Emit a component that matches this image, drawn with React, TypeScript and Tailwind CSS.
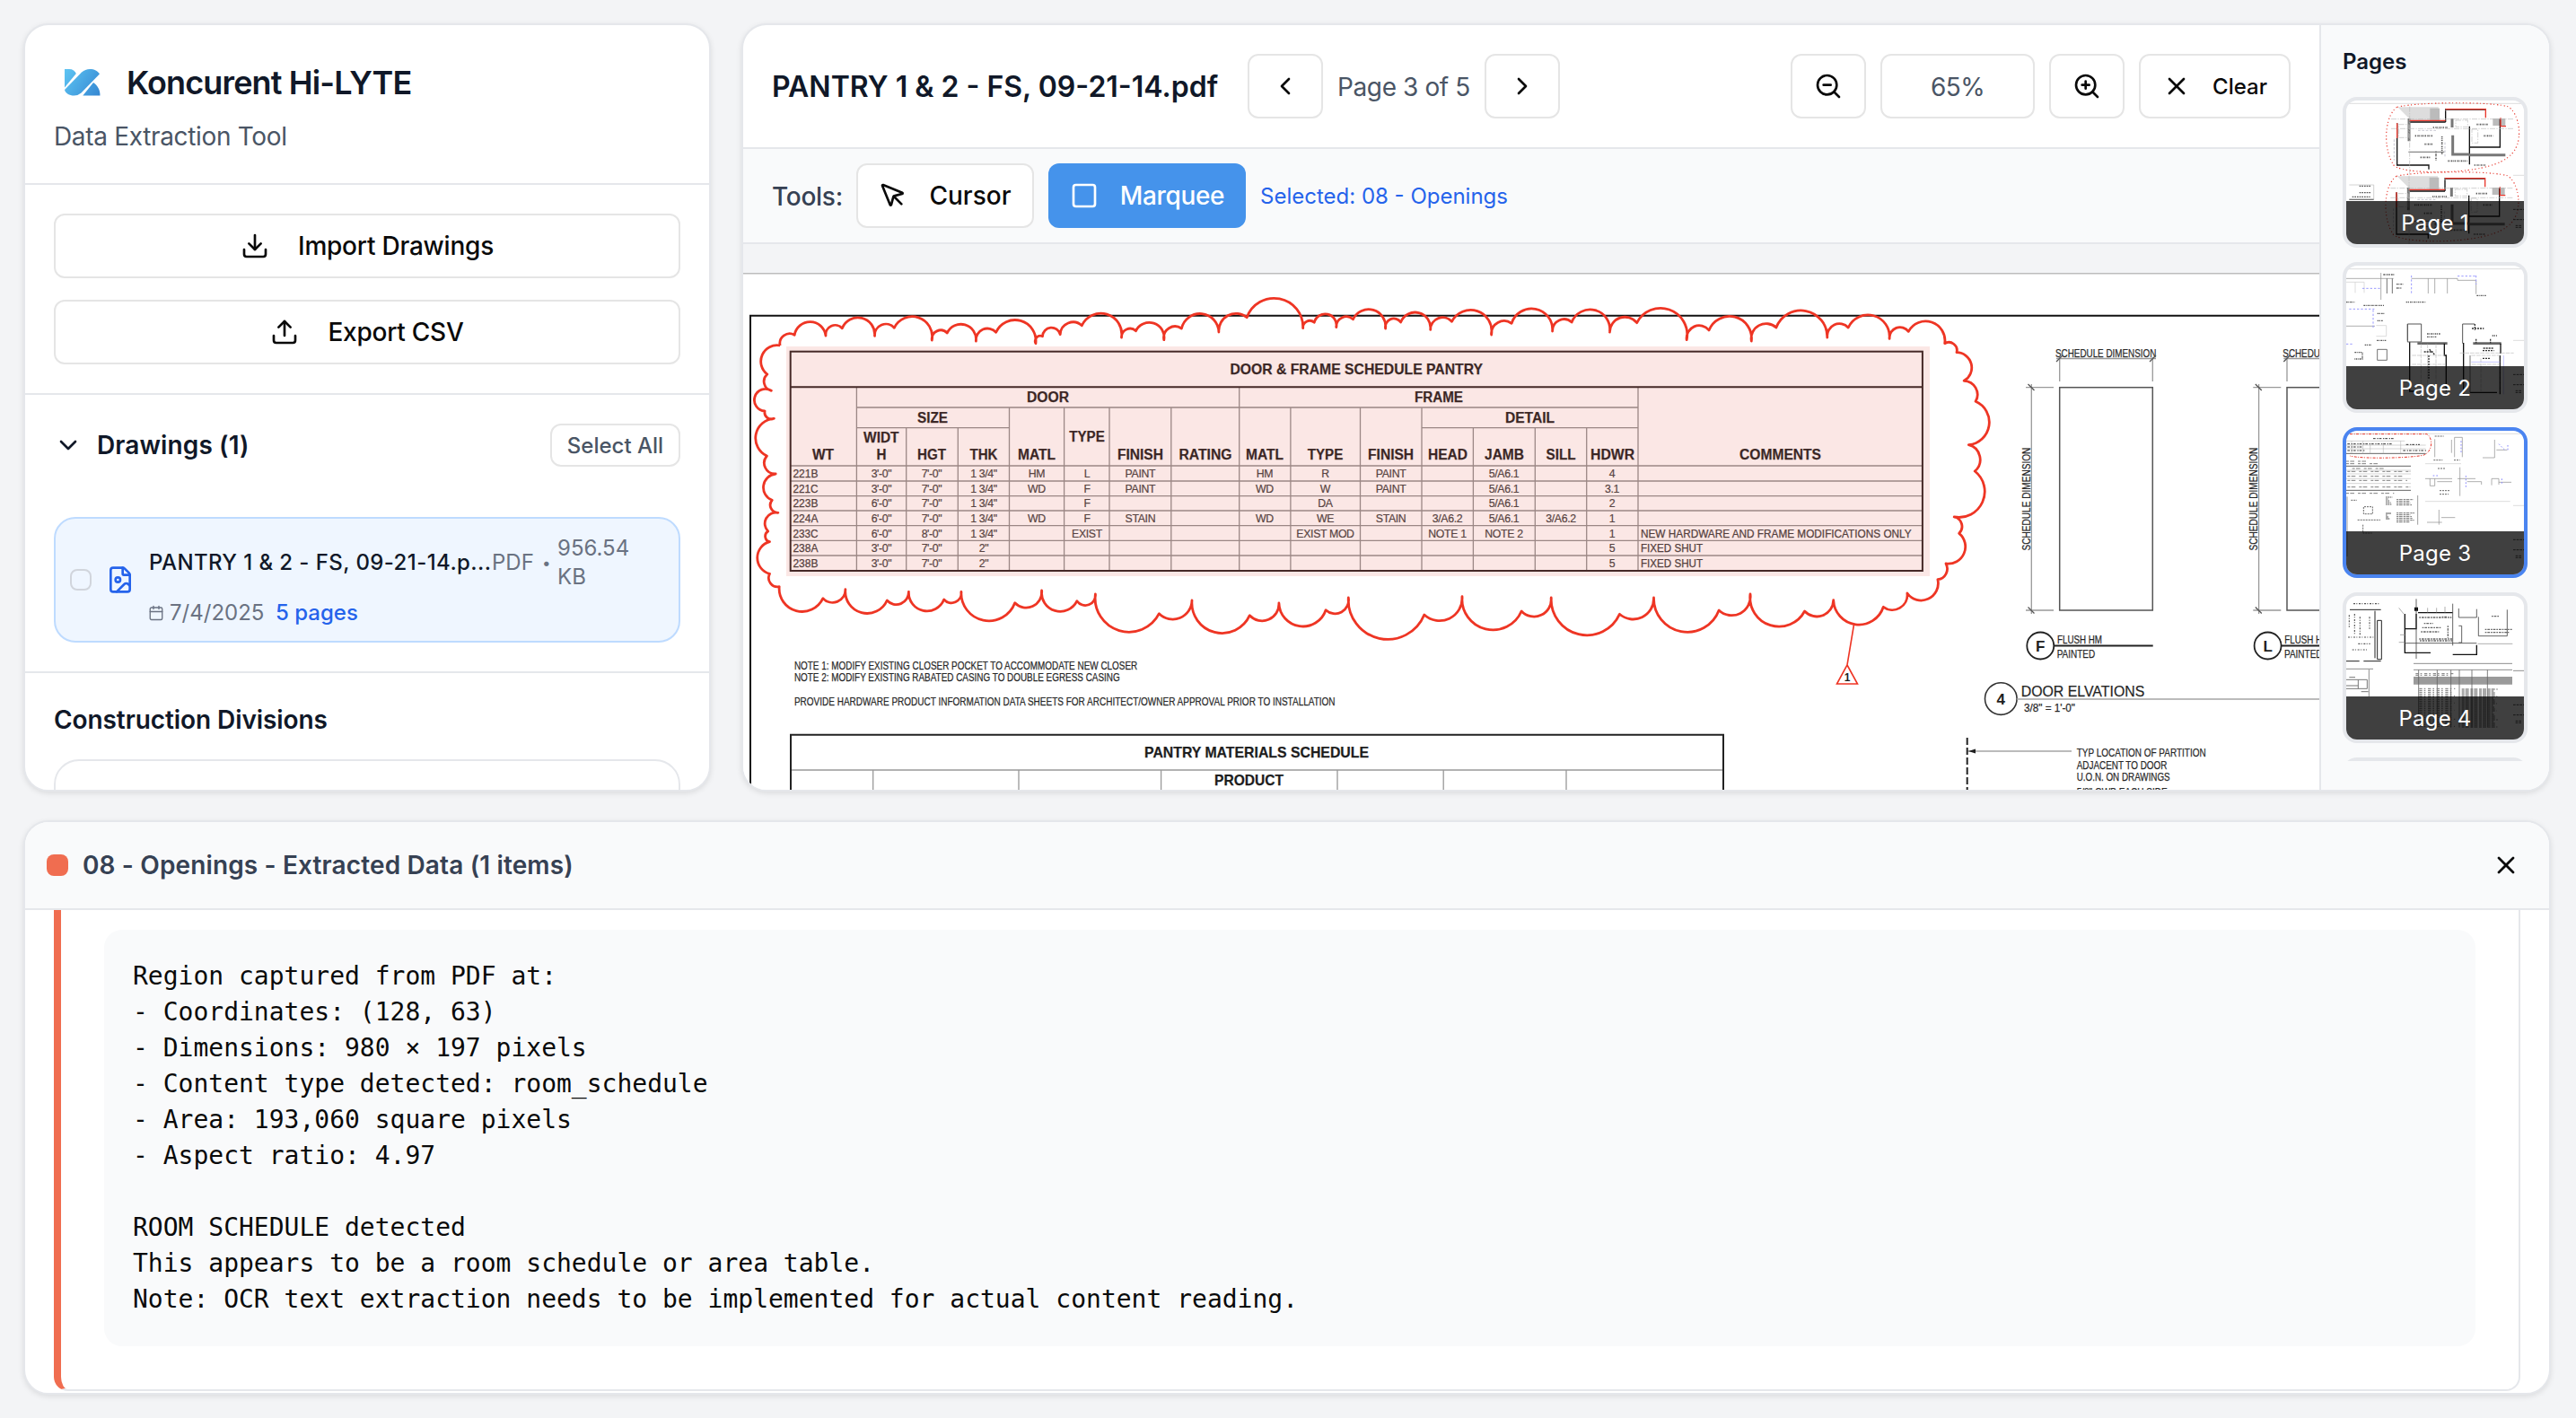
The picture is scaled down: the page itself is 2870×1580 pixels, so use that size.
import React from "react";
import {
  Calendar,
  ChevronDown,
  ChevronLeft,
  ChevronRight,
  Download,
  FileImage,
  MousePointer,
  Square,
  Upload,
  X,
  ZoomIn,
  ZoomOut,
} from "lucide-react";

type Pt = [number, number];

/* Chains circular arcs: cusp, bulge, cusp, bulge, ... cusp. */
function cloudPath(pts: Pt[]): string {
  let d = `M${pts[0][0].toFixed(1)} ${pts[0][1].toFixed(1)}`;
  for (let i = 0; i + 2 < pts.length; i += 2) {
    const [ax, ay] = pts[i];
    const [bx, by] = pts[i + 1];
    const [cx, cy] = pts[i + 2];
    const k = 2 * (ax * (by - cy) + bx * (cy - ay) + cx * (ay - by));
    const a2 = ax * ax + ay * ay;
    const b2 = bx * bx + by * by;
    const c2 = cx * cx + cy * cy;
    const ux = (a2 * (by - cy) + b2 * (cy - ay) + c2 * (ay - by)) / k;
    const uy = (a2 * (cx - bx) + b2 * (ax - cx) + c2 * (bx - ax)) / k;
    const r = Math.hypot(ax - ux, ay - uy);
    const side = (x: number, y: number) => (cx - ax) * (y - ay) - (cy - ay) * (x - ax);
    const large = side(bx, by) * side(ux, uy) > 0 ? 1 : 0;
    const sweep = side(bx, by) < 0 ? 1 : 0;
    d += `A${r.toFixed(1)} ${r.toFixed(1)} 0 ${large} ${sweep} ${cx.toFixed(1)} ${cy.toFixed(1)}`;
  }
  return d;
}

const scale = (pts: Pt[], ox: number, sx: number): Pt[] =>
  pts.map(([x, y]) => [ox + x / sx, 300 + y / 3]);

const cloudTopLeft: Pt[] = [
  [110, 255], [122, 220], [146, 220], [184, 176], [224, 222], [246, 187], [265, 197], [304, 161],
  [346, 223], [374, 183], [395, 196], [440, 158], [489, 237], [510, 204], [527, 213], [560, 183],
  [599, 240], [629, 198], [649, 211], [697, 170], [748, 248], [757, 223], [765, 224], [788, 195],
  [809, 218], [838, 177], [863, 188], [908, 147], [962, 228], [982, 198], [998, 206], [1030, 179],
  [1068, 236], [1095, 191], [1112, 198], [1158, 149], [1205, 210], [1247, 148], [1275, 161],
  [1343, 97], [1415, 197], [1432, 172], [1443, 178], [1468, 152], [1498, 194], [1522, 158],
  [1540, 167],
];
const cloudRight: Pt[] = [
  [54, 133], [95, 198], [117, 165], [132, 177], [165, 145], [204, 202], [234, 161], [256, 175],
  [300, 136], [352, 219], [381, 173], [401, 181], [448, 133], [500, 207], [527, 167], [547, 177],
  [591, 136], [639, 210], [678, 160], [705, 179], [761, 130], [826, 236], [857, 188], [880, 204],
  [928, 158], [983, 240], [1019, 182], [1043, 195], [1103, 137], [1167, 228], [1198, 182],
  [1218, 195], [1266, 152], [1318, 232], [1344, 194], [1364, 208], [1405, 174], [1452, 248],
  [1474, 250], [1481, 278], [1518, 325], [1499, 373], [1531, 412], [1527, 442], [1560, 510],
  [1510, 587], [1538, 632], [1525, 675], [1549, 745], [1475, 828], [1494, 857], [1487, 883],
  [1502, 927], [1455, 984], [1457, 1012], [1435, 1037], [1393, 1107], [1361, 1083], [1325, 1139],
  [1303, 1129], [1243, 1188], [1182, 1106], [1143, 1161], [1112, 1143], [1050, 1195], [980, 1086],
  [936, 1157], [904, 1140], [828, 1212], [746, 1098], [697, 1170], [663, 1153], [585, 1223],
  [497, 1098], [454, 1161], [425, 1143], [355, 1206], [281, 1094], [227, 1175], [189, 1155],
  [101, 1237], [5, 1098],
];
const cloudBottomLeft: Pt[] = [
  [1493, 1151], [1472, 1139], [1415, 1194], [1355, 1116], [1312, 1175], [1282, 1157], [1213, 1217],
  [1138, 1107], [1090, 1170], [1056, 1151], [981, 1212], [897, 1086], [868, 1123], [851, 1109],
  [810, 1143], [763, 1074], [722, 1131], [696, 1115], [632, 1175], [562, 1078], [536, 1115],
  [519, 1104], [477, 1142], [431, 1078], [400, 1121], [377, 1107], [327, 1150], [273, 1070],
  [239, 1114], [217, 1100], [166, 1144], [108, 1061], [84, 1045], [84, 1018], [53, 965], [84, 911],
  [73, 893], [80, 876], [73, 840], [105, 814], [86, 795], [90, 772], [68, 730], [99, 684],
  [71, 655], [77, 624], [49, 565], [95, 499], [74, 490], [72, 474], [46, 437], [88, 406],
  [70, 380], [78, 351], [62, 305], [110, 255],
];
const cloud = cloudPath([
  ...scale(cloudTopLeft, 820, 2.24),
  ...scale(cloudRight, 1500, 2.178),
  ...scale(cloudBottomLeft, 820, 2.24),
]);

const rowLines = [519, 536, 552.7, 569, 585.7, 602.3, 619];
const colLines: Pt[] = [
  [954.4, 431], [1009.7, 477], [1067.3, 477], [1124.5, 454], [1185.6, 454], [1236, 454],
  [1304.8, 454], [1380.7, 431], [1437.9, 454], [1515.5, 454], [1584, 454], [1641.4, 477],
  [1710.3, 477], [1767.7, 477], [1825, 431],
];
const heads: [string, number, number, number][] = [
  ["DOOR", 1167.5, 447.7, 47], ["SIZE", 1039, 470.5, 34], ["WIDT", 981.8, 493.3, 39.5],
  ["H", 982, 512.3, 11], ["WT", 917, 512.3, 24], ["HGT", 1038, 512.3, 32], ["THK", 1096, 512.3, 31],
  ["MATL", 1155, 512.3, 42], ["TYPE", 1211, 492, 39.5], ["FINISH", 1270.4, 512.3, 51],
  ["RATING", 1343, 512.3, 59], ["MATL", 1409, 512.3, 42], ["TYPE", 1476.5, 512.3, 39.5],
  ["FINISH", 1549.6, 512.3, 51], ["FRAME", 1603, 447.7, 54], ["DETAIL", 1704.5, 470.5, 55],
  ["HEAD", 1613, 512.3, 44], ["JAMB", 1676, 512.3, 44], ["SILL", 1739, 512.3, 33],
  ["HDWR", 1796.6, 512.3, 49], ["COMMENTS", 1983.5, 512.3, 91],
];
const colX = [982, 1038, 1096, 1155, 1211, 1270.4, 1343, 1409, 1476.5, 1549.6, 1612.5, 1675.5, 1739, 1796];
const rows: string[][] = [
  ["221B", `3'-0"`, `7'-0"`, `1 3/4"`, "HM", "L", "PAINT", "", "HM", "R", "PAINT", "", "5/A6.1", "", "4", ""],
  ["221C", `3'-0"`, `7'-0"`, `1 3/4"`, "WD", "F", "PAINT", "", "WD", "W", "PAINT", "", "5/A6.1", "", "3.1", ""],
  ["223B", `6'-0"`, `7'-0"`, `1 3/4"`, "", "F", "", "", "", "DA", "", "", "5/A6.1", "", "2", ""],
  ["224A", `6'-0"`, `7'-0"`, `1 3/4"`, "WD", "F", "STAIN", "", "WD", "WE", "STAIN", "3/A6.2", "5/A6.1", "3/A6.2", "1", ""],
  ["233C", `6'-0"`, `8'-0"`, `1 3/4"`, "", "EXIST", "", "", "", "EXIST MOD", "", "NOTE 1", "NOTE 2", "", "1", "NEW HARDWARE AND FRAME MODIFICATIONS ONLY"],
  ["238A", `3'-0"`, `7'-0"`, `2"`, "", "", "", "", "", "", "", "", "", "", "5", "FIXED SHUT"],
  ["238B", `3'-0"`, `7'-0"`, `2"`, "", "", "", "", "", "", "", "", "", "", "5", "FIXED SHUT"],
];

function Label({ x, y, w, size = 12.8, children }: { x: number; y: number; w: number; size?: number; children: string }) {
  return (
    <text x={x} y={y} textLength={w} lengthAdjust="spacingAndGlyphs" fontSize={size} stroke="#333" strokeWidth="0.250">
      {children}
    </text>
  );
}

function DoorElevation({ dx, mark }: { dx: number; mark: string }) {
  return (
    <g transform={`translate(${dx} 0)`}>
      <Label x={2290} y={398.4} w={112.3}>SCHEDULE DIMENSION</Label>
      <g stroke="#999" strokeWidth="1.3" fill="none">
        <path d="M2291 399.5H2402M2294.7 398V425M2398.3 398V425M2263.3 428V684M2257 431.7H2288M2257 680H2288" />
        <path d="M2291 403l7-7M2395 403l7-7M2259.500 428l7 7M2259.500 676.500l7 7" stroke="#555" />
      </g>
      <rect x="2294.700" y="431.700" width="103.600" height="248.300" fill="none" stroke="#555" strokeWidth="1.500" />
      <text transform="translate(2262 613.400) rotate(-90)" textLength="114.700" lengthAdjust="spacingAndGlyphs" fontSize="12.800" stroke="#333" strokeWidth="0.250">
        SCHEDULE DIMENSION
      </text>
      <circle cx="2273.300" cy="719.500" r="15" fill="none" stroke="#222" strokeWidth="1.800" />
      <text x="2273.300" y="725.500" textAnchor="middle" fontWeight="700" fontSize="17">{mark}</text>
      <path d="M2288 719.500H2398.700" stroke="#222" strokeWidth="2" />
      <Label x={2292} y={716.8} w={50}>FLUSH HM</Label>
      <Label x={2291.7} y={733} w={42.5}>PAINTED</Label>
    </g>
  );
}

function Blueprint() {
  return (
    <svg viewBox="828 304 1756 576" className="block h-[576px] w-[1756px] bg-white" fontFamily='"Liberation Sans", Arial, sans-serif' fill="#1f1f1f">
      <path d="M828 304.700H2584" stroke="#bdbdbd" strokeWidth="1.500" />
      <path d="M836 880V351.700H2584" fill="none" stroke="#111" strokeWidth="2" />

      <g stroke="#8f8f8f" strokeWidth="1.300">
        {rowLines.map((y) => <path key={y} d={`M881 ${y}H2142`} />)}
        {colLines.map(([x, y]) => <path key={x} d={`M${x} ${y}V636`} />)}
        <path d="M954.400 454H1825M954.400 476.700H1124.500M1584 476.700H1825" />
      </g>
      <rect x="880.700" y="391.700" width="1261.200" height="244.300" fill="none" stroke="#2a2020" strokeWidth="2" />
      <path d="M881 431.300H2142" stroke="#2a2020" strokeWidth="2" />
      <g fontWeight="700" fill="#1c1c1c">
        <Label x={1370.4} y={416.8} w={281.6} size={16.4}>DOOR &amp; FRAME SCHEDULE PANTRY</Label>
        {heads.map(([t, x, y, w], i) => <Label key={i} x={x - w / 2} y={y} w={w} size={16}>{t}</Label>)}
      </g>
      {rows.map((r, i) => {
        const y = 531.8 + i * 16.7;
        return (
          <g key={i} fontSize="12.300" fill="#404040">
            <Label x={883.4} y={y} w={28}>{r[0]}</Label>
            {colX.map((x, c) => r[c + 1] && (
              <text key={c} x={x} y={y} textAnchor="middle" letterSpacing="-0.350" stroke="#404040" strokeWidth="0.200">{r[c + 1]}</text>
            ))}
            {r[15] && <Label x={1828} y={y} w={r[15].length > 12 ? 301.6 : 69}>{r[15]}</Label>}
          </g>
        );
      })}
      <rect x="876" y="386" width="1274" height="256" fill="rgb(228 95 82 / 0.15)" />

      <path d={cloud} fill="none" stroke="#ee3524" strokeWidth="2.800" strokeLinejoin="round" />
      <path d="M2065.500 696L2058 741L2046.500 762H2069.500L2058 741" fill="none" stroke="#ee3524" strokeWidth="1.600" />
      <text x="2058" y="759" textAnchor="middle" fontSize="12" fontWeight="700">1</text>

      <Label x={884.9} y={745.8} w={382.3}>NOTE 1: MODIFY EXISTING CLOSER POCKET TO ACCOMMODATE NEW CLOSER</Label>
      <Label x={884.9} y={759.4} w={362.8}>NOTE 2: MODIFY EXISTING RABATED CASING TO DOUBLE EGRESS CASING</Label>
      <Label x={884.9} y={786.2} w={602.7}>PROVIDE HARDWARE PRODUCT INFORMATION DATA SHEETS FOR ARCHITECT/OWNER APPROVAL PRIOR TO INSTALLATION</Label>

      <path d="M972.700 858V880M1135 858V880M1293.600 858V880M1490 858V880M1608.200 858V880M1745 858V880M881 858H1920" stroke="#999" strokeWidth="1.300" />
      <path d="M881 880V818.700H1920V880" fill="none" stroke="#222" strokeWidth="2" />
      <g fontWeight="700" fill="#1c1c1c">
        <Label x={1275} y={844} w={250} size={16.4}>PANTRY MATERIALS SCHEDULE</Label>
        <Label x={1353} y={875} w={77} size={16.4}>PRODUCT</Label>
      </g>

      <DoorElevation dx={0} mark="F" />
      <DoorElevation dx={253.3} mark="L" />
      <circle cx="2229.300" cy="778.600" r="17.800" fill="none" stroke="#333" strokeWidth="1.600" />
      <text x="2229.300" y="784.500" textAnchor="middle" fontSize="17" fontWeight="700">4</text>
      <Label x={2251.7} y={775.6} w={137.6} size={17}>DOOR ELVATIONS</Label>
      <Label x={2255} y={792.5} w={57} size={12.5}>{`3/8" = 1'-0"`}</Label>
      <path d="M2247 779H2584M2192 837H2308" stroke="#a5a5a5" strokeWidth="1.300" />
      <path d="M2193 837l8-2.500v5z" />
      <path d="M2191.700 822V880" stroke="#222" strokeWidth="2" strokeDasharray="8 3" />
      <Label x={2313.7} y={842.6} w={144}>TYP LOCATION OF PARTITION</Label>
      <Label x={2313.7} y={856.5} w={100.7}>ADJACENT TO DOOR</Label>
      <Label x={2313.7} y={870.4} w={104}>U.O.N. ON DRAWINGS</Label>
      <Label x={2313.7} y={886.5} w={101}>{`5/8" GWB EACH SIDE`}</Label>
    </svg>
  );
}

function Plan() {
  return (
    <g fill="none">
      <path d="M172 22h136v44h-92l-44-44z" fill="#ddd" />
      <path d="M280 26h32v40h-32zM490 60h42v24h-42z" fill="#bbb" />
      <path d="M170 76V216H276v14M332 34v38M212 72H332M330 30H466M412 86V214M514 60V156H412" stroke="#111" strokeWidth="4" />
      <path d="M210 60V136M354 60v30M356 116v64H412M412 182H532" stroke="#777" strokeWidth="9" />
      <path d="M208 172h120" stroke="#888" strokeWidth="4" />
      <path d="M212 67H332M332 29H466V58M170 76v50M516 58v28H534" stroke="#e8372c" strokeWidth="4" />
      <path d="M150 62H560M150 94H560M212 20V250M176 80h32v44h-32zM366 66h40v22h-40zM420 96h20v46h-20z" stroke="#bbb" strokeWidth="2" strokeDasharray="18 4 4 4" />
      <path d="M230 118h58M262 146h28M248 190h34M436 80h38M460 118h30M340 202h64M290 90h50M300 170v30M320 120v60M428 216h40" stroke="#555" strokeWidth="5" strokeDasharray="4 3 2 2" />
      <path d="M160 130v70M240 100h60M330 140v50" stroke="#aab" strokeWidth="2" strokeDasharray="8 5" />
      <path d="M170 22C128 50 120 160 160 218C200 250 470 250 540 190C600 150 580 40 540 20C470 2 230 6 170 22" stroke="#e8372c" strokeWidth="3.500" strokeDasharray="4 9 3 7" />
    </g>
  );
}

const notes = (x: number, y: number, w: number, n: number, gap = 6) =>
  Array.from({ length: n }, (_, i) => `M${x} ${y + i * gap}h${w - ((i * 13) % 17)}`).join("");

function Thumb1() {
  return (
    <>
      <path d="M0 10H594M558 250h36" stroke="#ccc" strokeWidth="2" />
      <Plan />
      <g transform="translate(-2 231)"><Plan /></g>
      <path d="M10 282h82v48h-82" fill="none" stroke="#bbb" strokeWidth="2" />
      <path d="M10 331h82" stroke="#777" strokeWidth="4" />
      <path d="M44 286h40M44 308h40M20 322h60" stroke="#555" strokeWidth="4" strokeDasharray="5 3" />
    </>
  );
}

function Thumb2() {
  return (
    <g fill="none">
      <path d="M0 11H594M558 250h36M0 55h60v36M30 55v36M100 200h34v36h-34" stroke="#ccc" strokeWidth="2" />
      <path d="M0 43H158M116 24v90M218 43H372v6h62v46M274 43v50M296 43v50M338 43v50M0 202h96" stroke="#888" strokeWidth="2" />
      <path d="M136 43v50M154 43v50M104 280h32v36h-32z" stroke="#555" strokeWidth="2.500" />
      <path d="M54 76h64M10 145h84M90 148v60M218 33v60M434 33v30M372 35h62M0 262h20" stroke="#99f" strokeWidth="3" strokeDasharray="7 6" />
      <path d="M200 122h66M58 133h68M124 30h36M168 62h22M168 75h16M436 100h32M0 122h28M104 160h24M104 184h18M102 250h32M28 290h26v22h-26M62 265h22M270 228h44M270 238h32M488 234h16" stroke="#555" strokeWidth="4" strokeDasharray="5 2 3 3" />
      <path d="M205 195h46v60h-46zV250M389 260V195h40" stroke="#555" strokeWidth="3" />
      <path d="M238 260h100M424 260h94" stroke="#666" strokeWidth="8" />
      <path d="M212 256V420h22M328 260v40h6v120M392 258v170M516 260v34M514 300v130M414 424h90" stroke="#111" strokeWidth="4" />
      <path d="M414 300v124" stroke="#777" strokeWidth="3" />
      <path d="M220 300h110M220 330h110M250 262v150M272 262v150M300 262v150M418 300h94v120M380 292h180M420 330h90M450 310v110" stroke="#bbb" strokeWidth="2" strokeDasharray="14 3" />
      <path d="M278 280l18 18M260 288h30M276 300v80M458 276h34M456 284h38M456 310h24M420 210h40M430 195v20M434 245v14M482 245v14" stroke="#333" strokeWidth="4" strokeDasharray="6 3" />
      <path d="M418 322h96M526 300v130" stroke="#aaf" strokeWidth="2" />
    </g>
  );
}

function Thumb3() {
  return (
    <g fill="none">
      <path d="M0 10H594M558 250h36M264 236h284M264 110h120" stroke="#ccc" strokeWidth="2" />
      <path d="M12 11H270C290 24 290 66 262 80C240 90 60 96 12 84" stroke="#e8372c" strokeWidth="3" strokeDasharray="9 5 3 4" />
      <path d="M0 76H266M0 118H216M0 199H216" stroke="#444" strokeWidth="2.500" />
      <path d="M0 34H196M0 48H266M0 60H266M18 34v42M56 34v42M80 40v36M124 40v36M182 34v42M0 132H216M0 144H216M0 160H216M0 176H216" stroke="#aaa" strokeWidth="1.500" />
      <path d="M90 26h70M4 44h150M4 66h60M4 54h50M200 46h46M190 66h80" stroke="#333" strokeWidth="3" strokeDasharray="8 5 4 3" />
      <path d="M0 102h66M0 110h116M0 209h160M20 126h110M4 136h210M4 152h190M4 166h200M4 188h210" stroke="#666" strokeWidth="2.500" strokeDasharray="9 4 14 12" />
      <path d="M296 28v60M352 30v44M362 88V22h26v66" stroke="#888" strokeWidth="2" />
      <path d="M264 160h90M304 170h50M280 160v24h16v-24M380 122v96M372 160h60M404 170h48v10M486 182v-22h24v20M510 172h42M456 90h40V30M502 64h36M310 264v50M318 290h46M270 306h50" stroke="#888" strokeWidth="2" />
      <path d="M384 34v40M510 44l20 20M540 48v20M290 150h20M400 150v40M520 160v20" stroke="#88f" strokeWidth="3" strokeDasharray="5 6" />
      <path d={notes(132, 222, 22, 5)} stroke="#555" strokeWidth="3" strokeDasharray="5 2" />
      <path d={notes(168, 230, 56, 4) + notes(168, 275, 60, 6)} stroke="#555" strokeWidth="2.500" strokeDasharray="7 2 11 3" />
      <path d={notes(132, 276, 18, 4)} stroke="#555" strokeWidth="3" />
      <path d="M239 216v98M3 220v200" stroke="#888" strokeWidth="2.500" />
      <path d="M16 232h20M60 254h28v24h-30v-24M38 298h76M56 314v28h30M306 126h26M312 200h36M312 212h30M296 18h30M292 98h30M360 98h20" stroke="#666" strokeWidth="3" strokeDasharray="6 3" />
    </g>
  );
}

function Thumb4() {
  return (
    <g fill="none">
      <path d="M12 46H116M0 218h44M58 218h58M96 50v158M104 82h14v130H104z" stroke="#222" strokeWidth="3" />
      <path d="M24 26h90M10 64v40M28 60v70M46 70v60M6 138h90M20 180h50M40 160h40M78 70v40" stroke="#555" strokeWidth="3.500" strokeDasharray="6 4 3 5" />
      <path d="M228 38h12v12h-12z" fill="#000" />
      <path d="M196 60V190H282M240 56H356M234 60v50h-38M356 196h80v-32" stroke="#111" strokeWidth="4" />
      <path d="M376 42v30h60V44M376 100h10v56h-10M442 70V134H538V46M356 26v140M234 10v200M196 158H436" stroke="#444" strokeWidth="2.500" />
      <path d="M244 72h108M260 92h30M254 106h64M250 120h60M244 144h110M246 150h108M464 112h90M464 122h80M486 68h26M340 100v40M320 70h20" stroke="#666" strokeWidth="4" strokeDasharray="5 3 8 3" />
      <path d="M176 40l16 20M180 130h20M176 155h20M272 40v16M302 40v16M330 36v20M440 160H556" stroke="#888" strokeWidth="2" />
      <path d="M225 226H555M225 247H555M558 250h36M0 244h90M76 246v90" stroke="#777" strokeWidth="2.500" />
      <path d="M225 270H555v26H225z" fill="#9a9a9a" />
      <path d="M242 247V440M304 247V440M350 247V440M378 247V440M420 247V440M472 247V440" stroke="#666" strokeWidth="2.500" />
      <path d={notes(232, 260, 130, 2, 5) + notes(244, 310, 120, 22)} stroke="#777" strokeWidth="3" strokeDasharray="10 6 5 8" />
      <path d={notes(386, 312, 120, 22)} stroke="#555" strokeWidth="3" strokeDasharray="9 3 12 5" />
      <path d="M0 280h70v30H0M40 280v30M50 320h24M10 272h20M0 300h40" stroke="#777" strokeWidth="3" />
    </g>
  );
}

function Thumb({ n, active, children }: { n: number; active?: boolean; children?: React.ReactNode }) {
  return (
    <div className={`relative h-[168px] w-[206px] shrink-0 overflow-hidden rounded-[16px] border-4 bg-white ${active ? "border-[#4a84f0]" : "border-gray-200"}`}>
      <svg viewBox="0 0 594 480" className="block h-[160px] w-[198px]">
        {children}
        <g stroke="#555" strokeWidth="3" strokeDasharray="8 3">
          <path d="M558 364h36M558 398h36M566 418h22M566 424h22" />
        </g>
      </svg>
      <div className="absolute inset-x-0 bottom-0 flex h-12 items-center justify-center bg-black/75 pt-[2px] text-[24px] leading-8 tracking-[0.01em] text-white">
        Page {n}
      </div>
    </div>
  );
}

function Logo() {
  return (
    <svg viewBox="0 0 64 64" className="size-16 shrink-0">
      <defs>
        <linearGradient id="brand" x1="12" y1="20" x2="52" y2="46" gradientUnits="userSpaceOnUse">
          <stop offset="0" stopColor="#5cc3f2" />
          <stop offset="1" stopColor="#3587d2" />
        </linearGradient>
      </defs>
      <g fill="url(#brand)">
        <path d="M12 17H17C21 17 23.500 19 24.800 22L12 37.500Z" />
        <path d="M31 20.500Q35 17 40 17C45 17 49 19 50.900 22.500L30.500 43.500Q27 46.500 22.500 46.500C17 46.500 13 44 12 40Z" />
        <path d="M44 32C49 35.500 51.500 40 51.500 46.500H32.300Z" />
      </g>
    </svg>
  );
}

const outline = "flex h-[72px] items-center justify-center rounded-[12px] border-2 border-neutral-200 bg-white text-neutral-950";

export default function App() {
  return (
    <div className="flex h-[1580px] w-[2870px] flex-col gap-8 bg-[#f3f4f6] py-[26px] pr-[28px] pl-[26px] font-['Inter',sans-serif] text-[28px] leading-10 antialiased">
      <div className="flex h-[856px] gap-[34px]">
        <aside className="flex w-[766px] shrink-0 flex-col overflow-hidden rounded-[28px] border-2 border-gray-200 bg-white shadow-[0_2px_6px_rgba(0,0,0,0.1)]">
          <header className="shrink-0 border-b-2 border-gray-200 p-8">
            <div className="mb-2 flex items-center gap-4">
              <Logo />
              <h1 className="pl-[1px] text-[36px] font-semibold tracking-[-0.024em] whitespace-nowrap text-gray-900">Koncurent Hi-LYTE</h1>
            </div>
            <p className="tracking-[-0.012em] text-gray-600">Data Extraction Tool</p>
          </header>
          <div className="flex shrink-0 flex-col gap-6 border-b-2 border-gray-200 p-8">
            <button className={`${outline} gap-8 font-medium tracking-[-0.008em]`}><Download size={32} />Import Drawings</button>
            <button className={`${outline} gap-8 font-medium tracking-[-0.008em]`}><Upload size={32} />Export CSV</button>
          </div>
          <section className="shrink-0 border-b-2 border-gray-200 p-8">
            <div className="mb-14 flex h-12 items-center justify-between">
              <div className="flex items-center gap-4 font-semibold tracking-[0.004em] text-gray-900">
                <ChevronDown size={32} />
                <span>Drawings (1)</span>
              </div>
              <button className="flex h-12 w-[145px] items-center justify-center rounded-[12px] border-2 border-neutral-200 pt-[1px] text-[24px] font-medium text-gray-600">Select All</button>
            </div>
            <div className="flex h-[140px] items-center rounded-[24px] border-2 border-blue-200 bg-[#eff6ff] px-4 text-[24px] leading-8">
              <span className="size-6 shrink-0 rounded-[8px] border-2 border-gray-300" />
              <FileImage size={32} className="mx-4 shrink-0 text-[#2563eb]" />
              <div className="flex flex-1 flex-col gap-2 pt-[1px]">
                <div className="flex items-center text-gray-500">
                  <span className="w-[378px] shrink-0 font-medium tracking-[0.017em] whitespace-nowrap text-gray-900">PANTRY 1 &amp; 2 - FS, 09-21-14.p...</span>
                  <span className="ml-1 w-[54px] shrink-0">PDF</span>
                  <span className="w-[19px] shrink-0 pl-[2px] text-[17px]">•</span>
                  <span className="w-[84px]">956.54 KB</span>
                </div>
                <div className="flex items-center text-gray-500">
                  <Calendar size={18} strokeWidth={1.8} className="mr-[6px] -ml-[1px]" />
                  <span className="w-[118px]">7/4/2025</span>
                  <span className="font-medium text-[#2563eb]">5 pages</span>
                </div>
              </div>
            </div>
          </section>
          <section className="shrink-0 p-8">
            <h2 className="mb-6 font-semibold tracking-[-0.003em] text-gray-900">Construction Divisions</h2>
            <div className="h-[200px] rounded-[28px] border-2 border-gray-200" />
          </section>
        </aside>

        <main className="flex w-[2016px] shrink-0 overflow-hidden rounded-[28px] border-2 border-gray-200 bg-white shadow-[0_2px_6px_rgba(0,0,0,0.1)]">
          <div className="flex w-[1756px] shrink-0 flex-col">
            <div className="flex h-[138px] shrink-0 items-center justify-between border-b-2 border-gray-200 px-8">
              <div className="flex items-center gap-4">
                <h2 className="w-[514px] pt-[2px] text-[32px] font-semibold whitespace-nowrap text-gray-900">PANTRY 1 &amp; 2 - FS, 09-21-14.pdf</h2>
                <button className={`${outline} w-[84px]`}><ChevronLeft size={32} /></button>
                <span className="w-[148px] pt-[1px] text-center tracking-[-0.014em] whitespace-nowrap text-gray-600">Page 3 of 5</span>
                <button className={`${outline} w-[84px]`}><ChevronRight size={32} /></button>
              </div>
              <div className="flex items-center gap-4">
                <button className={`${outline} w-[84px]`}><ZoomOut size={32} /></button>
                <div className="flex h-[72px] w-[172px] items-center justify-center rounded-[12px] border-2 border-neutral-200 pt-[1px] tracking-[-0.02em] text-gray-600">65%</div>
                <button className={`${outline} w-[84px]`}><ZoomIn size={32} /></button>
                <button className={`${outline} w-[169px] gap-6 text-[24px] font-medium`}><X size={32} /><span className="pt-[1px]">Clear</span></button>
              </div>
            </div>
            <div className="flex h-[106px] shrink-0 items-center gap-4 border-b-2 border-gray-200 bg-gray-50 px-8 font-medium">
              <span className="w-[78px] pt-[1px] tracking-[-0.01em] text-gray-700">Tools:</span>
              <button className={`${outline} w-[198px] gap-6`}><MousePointer size={32} />Cursor</button>
              <button className="flex h-[72px] w-[220px] items-center justify-center gap-6 rounded-[12px] bg-[#4593eb] tracking-[-0.012em] text-white"><Square size={32} />Marquee</button>
              <span className="pt-[1px] text-[24px] font-normal whitespace-nowrap text-[#2563eb]">Selected: 08 - Openings</span>
            </div>
            <div className="flex-1 overflow-hidden bg-[#f3f4f6] pt-8">
              <Blueprint />
            </div>
          </div>
          <nav className="flex w-[256px] shrink-0 flex-col border-l-2 border-gray-200 bg-gray-50 px-6 pt-[25px] pb-8">
            <h3 className="mb-[23px] text-[24px] leading-8 font-semibold text-gray-900">Pages</h3>
            <div className="flex min-h-0 flex-1 flex-col gap-4 overflow-hidden">
              <Thumb n={1}><Thumb1 /></Thumb>
              <Thumb n={2}><Thumb2 /></Thumb>
              <Thumb n={3} active><Thumb3 /></Thumb>
              <Thumb n={4}><Thumb4 /></Thumb>
              <div className="h-[168px] w-[206px] shrink-0 rounded-[16px] border-4 border-gray-200 bg-white" />
            </div>
          </nav>
        </main>
      </div>

      <section className="flex h-[640px] flex-col overflow-hidden rounded-[28px] border-2 border-gray-200 bg-white shadow-[0_2px_6px_rgba(0,0,0,0.1)]">
        <header className="flex h-[98px] shrink-0 items-center gap-4 border-b-2 border-gray-200 bg-gray-50 pr-8 pl-6">
          <span className="size-6 rounded-[8px] bg-[#f06d50]" />
          <h2 className="flex-1 font-semibold tracking-[0.005em] text-gray-700">08 - Openings - Extracted Data (1 items)</h2>
          <X size={32} className="text-neutral-950" />
        </header>
        <div className="flex h-[538px] flex-col justify-end overflow-hidden px-8">
          <article className="mb-[2px] shrink-0 rounded-[16px] border-2 border-l-8 border-gray-200 border-l-[#f06d50] px-12 pt-12 pb-12">
            <pre className="h-[464px] rounded-[20px] bg-gray-50 p-8 font-['DejaVu_Sans_Mono',monospace] text-[28px] leading-10 text-neutral-950">{`Region captured from PDF at:
- Coordinates: (128, 63)
- Dimensions: 980 × 197 pixels
- Content type detected: room_schedule
- Area: 193,060 square pixels
- Aspect ratio: 4.97

ROOM SCHEDULE detected
This appears to be a room schedule or area table.
Note: OCR text extraction needs to be implemented for actual content reading.`}</pre>
          </article>
        </div>
      </section>
    </div>
  );
}
